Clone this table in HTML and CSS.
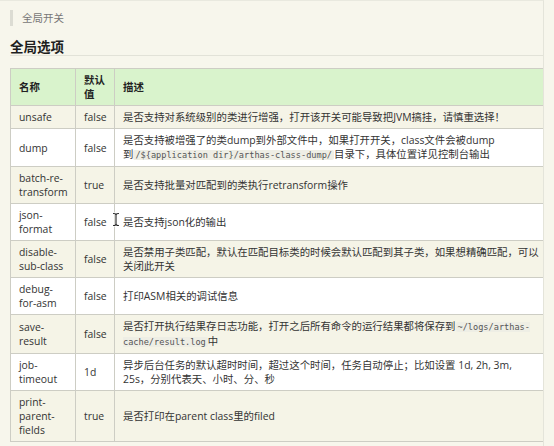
FILE: index.html
```html
<!DOCTYPE html>
<html lang="zh-CN">
<head>
<meta charset="utf-8">
<title>全局选项</title>
<link rel="stylesheet" href="styles.css">
</head>
<body>
<div class="page">
  <blockquote class="note">全局开关</blockquote>
  <h2 class="title">全局选项</h2>
  <table class="opts">
    <colgroup><col class="c-name"><col class="c-def"><col class="c-desc"></colgroup>
    <thead>
      <tr><th>名称</th><th>默认值</th><th>描述</th></tr>
    </thead>
    <tbody>
      <tr><td>unsafe</td><td>false</td><td>是否支持对系统级别的类进行增强，打开该开关可能导致把JVM搞挂，请慎重选择！</td></tr>
      <tr><td>dump</td><td>false</td><td>是否支持被增强了的类dump到外部文件中，如果打开开关，class文件会被dump<br>到<code>/${application dir}/arthas-class-dump/</code>目录下，具体位置详见控制台输出</td></tr>
      <tr><td>batch-re-transform</td><td>true</td><td>是否支持批量对匹配到的类执行retransform操作</td></tr>
      <tr><td>json-format</td><td>false</td><td>是否支持json化的输出</td></tr>
      <tr><td>disable-sub-class</td><td>false</td><td>是否禁用子类匹配，默认在匹配目标类的时候会默认匹配到其子类，如果想精确匹配，可以<br>关闭此开关</td></tr>
      <tr><td>debug-for-asm</td><td>false</td><td>打印ASM相关的调试信息</td></tr>
      <tr><td>save-result</td><td>false</td><td>是否打开执行结果存日志功能，打开之后所有命令的运行结果都将保存到<code>~/logs/arthas-<br>cache/result.log</code>中</td></tr>
      <tr><td>job-timeout</td><td>1d</td><td>异步后台任务的默认超时时间，超过这个时间，任务自动停止；比如设置 1d, 2h, 3m,<br>25s，分别代表天、小时、分、秒</td></tr>
      <tr><td>print-parent-fields</td><td>true</td><td>是否打印在parent class里的filed</td></tr>
    </tbody>
  </table>
  <svg class="cursor" width="8" height="15" viewBox="0 0 8 15" aria-hidden="true">
    <path d="M1.5 1.5C3 1.5 4 2 4 3V12C4 13 3 13.5 1.5 13.5M6.5 1.5C5 1.5 4 2 4 3M4 12C4 13 5 13.5 6.5 13.5" fill="none" stroke="#fff" stroke-width="2.6" stroke-linecap="round"/>
    <path d="M1.5 1.5C3 1.5 4 2 4 3V12C4 13 3 13.5 1.5 13.5M6.5 1.5C5 1.5 4 2 4 3M4 12C4 13 5 13.5 6.5 13.5" fill="none" stroke="#222" stroke-width="1.1" stroke-linecap="round"/>
  </svg>
</div>
</body>
</html>
```

FILE: styles.css
```css
* { box-sizing: border-box; }

html, body {
  margin: 0;
  background: #f7f6ec;
}

body {
  font-family: "Open Sans", "Noto Sans CJK SC", sans-serif;
  font-size: 10.4px;
  color: #333;
}

.page {
  position: relative;
  width: 544px;
  height: 446px;
  padding-left: 10px;
  border-top: 1px solid #e9e9df;
  border-right: 1px solid #e4e4da;
  overflow: hidden;
}

.note {
  margin: 9px 0 0;
  padding-left: 9px;
  border-left: 3px solid #dcdcd3;
  color: #777;
  font-family: "Noto Sans CJK SC", sans-serif;
  font-size: 10.5px;
  line-height: 16px;
}

.title {
  margin: 11px 0 0;
  font-family: "Noto Sans CJK SC", sans-serif;
  font-size: 13.5px;
  font-weight: bold;
  line-height: 18px;
  color: #1e1e1e;
  border-bottom: 1px solid #e2e2d8;
}

.opts {
  margin-top: 12px;
  width: 533px;
  border-collapse: collapse;
  table-layout: fixed;
  border: 1px solid #bcbcb2;
}

.c-name { width: 65px; }
.c-def { width: 39px; }
.c-desc { width: 429px; }

.opts th,
.opts td {
  border: 1px solid #cdcdc4;
  padding: 4px 7px 4px 8px;
  line-height: 14px;
  text-align: left;
  vertical-align: middle;
}

.opts th:last-child,
.opts td:last-child {
  padding-right: 0;
}

.opts th {
  background: #d9f3cc;
  font-weight: bold;
  color: #222;
  font-family: "Noto Sans CJK SC", sans-serif;
}

.opts tbody tr:nth-child(odd) { background: #f5f4e7; }
.opts tbody tr:nth-child(even) { background: #ffffff; }

.opts code {
  font-family: "DejaVu Sans Mono", monospace;
  font-size: 8.6px;
  color: #555;
  background: #eeeee5;
  padding: 0 2px;
  border-radius: 2px;
}

.cursor {
  position: absolute;
  left: 112px;
  top: 211px;
}
```
